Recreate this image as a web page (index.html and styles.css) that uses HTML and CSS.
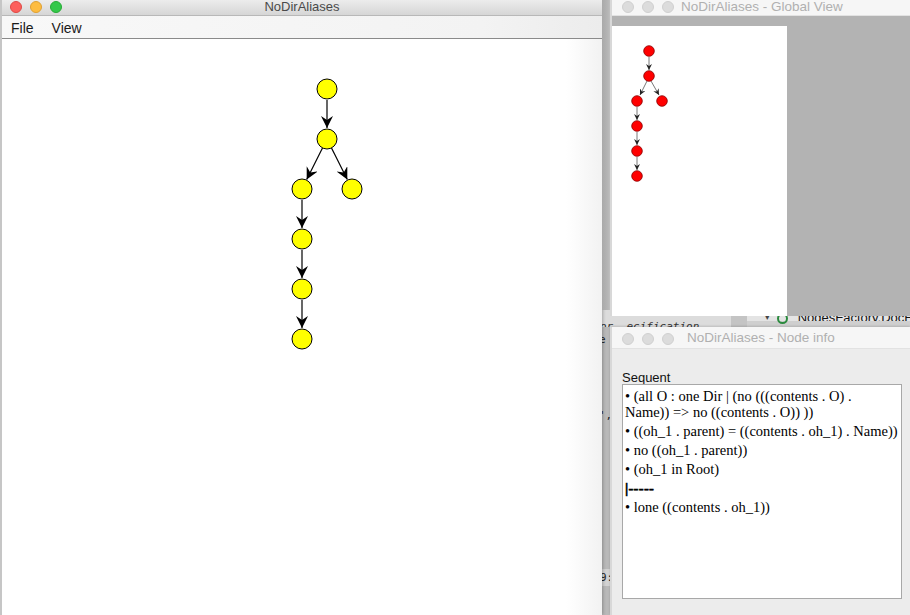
FILE: index.html
```html
<!DOCTYPE html>
<html>
<head>
<meta charset="utf-8">
<link rel="stylesheet" href="styles.css">
</head>
<body>
<div class="desktop">
  <div class="ide">
    <div class="ide-row">
      <span class="ide-code">or &nbsp;ecification</span>
      <span class="ide-gutter"></span>
      <span class="ide-tri">▾</span>
      <span class="ide-dot"></span>
      <span class="ide-name">NodesFactory.DocF</span>
    </div>
    <div class="ide-side">
      <span class="ide-bit b1">e</span>
      <span class="ide-bit b2">',</span>
      <span class="ide-bit b3">9:</span>
    </div>
  </div>

  <div class="window main-win">
    <div class="titlebar active">
      <div class="lights">
        <span class="light red"></span>
        <span class="light yellow"></span>
        <span class="light green"></span>
      </div>
      <div class="title">NoDirAliases</div>
    </div>
    <div class="menubar">
      <span class="menu">File</span>
      <span class="menu">View</span>
    </div>
    <div class="canvas">
      <svg width="600" height="576" viewBox="2 39 600 576">
        <defs>
          <marker id="ah" markerWidth="14" markerHeight="14" refX="12" refY="6" orient="auto" markerUnits="userSpaceOnUse">
            <path d="M12,6 L0,0 L4,6 L0,12 Z" fill="#000"/>
          </marker>
        </defs>
        <g stroke="#000" stroke-width="1.2" fill="none" marker-end="url(#ah)">
          <line x1="327" y1="100" x2="327" y2="128"/>
          <line x1="322.5" y1="148" x2="306.7" y2="179.6"/>
          <line x1="331.5" y1="148" x2="347.3" y2="179.6"/>
          <line x1="302" y1="200" x2="302" y2="228"/>
          <line x1="302" y1="250" x2="302" y2="278"/>
          <line x1="302" y1="300" x2="302" y2="328"/>
        </g>
        <g fill="#ffff00" stroke="#000" stroke-width="1">
          <circle cx="327" cy="89" r="10"/>
          <circle cx="327" cy="139" r="10"/>
          <circle cx="302" cy="189" r="10"/>
          <circle cx="352" cy="189" r="10"/>
          <circle cx="302" cy="239" r="10"/>
          <circle cx="302" cy="289" r="10"/>
          <circle cx="302" cy="339" r="10"/>
        </g>
      </svg>
    </div>
  </div>

  <div class="gutter-strip"></div>

  <div class="window global-win">
    <div class="titlebar inactive">
      <div class="lights">
        <span class="light grey"></span>
        <span class="light grey"></span>
        <span class="light grey"></span>
      </div>
      <div class="title left-title">NoDirAliases - Global View</div>
    </div>
    <div class="global-body">
      <div class="mini">
        <svg width="175" height="291" viewBox="612 27 175 291">
          <defs>
            <marker id="ahs" markerWidth="8" markerHeight="8" refX="6" refY="3" orient="auto" markerUnits="userSpaceOnUse">
              <path d="M6,3 L0,0 L2,3 L0,6 Z" fill="#222"/>
            </marker>
          </defs>
          <g stroke="#555" stroke-width="0.8" fill="none" marker-end="url(#ahs)">
            <line x1="649" y1="58" x2="649" y2="71"/>
            <line x1="647" y1="82" x2="640" y2="96"/>
            <line x1="651" y1="82" x2="659" y2="96"/>
            <line x1="637" y1="108" x2="637" y2="121"/>
            <line x1="637" y1="133" x2="637" y2="146"/>
            <line x1="637" y1="158" x2="637" y2="171"/>
          </g>
          <g fill="#ff0000" stroke="#8a0000" stroke-width="0.8">
            <circle cx="649" cy="52" r="5.3"/>
            <circle cx="649" cy="77" r="5.3"/>
            <circle cx="637" cy="102" r="5.3"/>
            <circle cx="662" cy="102" r="5.3"/>
            <circle cx="637" cy="127" r="5.3"/>
            <circle cx="637" cy="152" r="5.3"/>
            <circle cx="637" cy="177" r="5.3"/>
          </g>
        </svg>
      </div>
    </div>
  </div>

  <div class="window info-win">
    <div class="titlebar inactive tall">
      <div class="lights">
        <span class="light grey"></span>
        <span class="light grey"></span>
        <span class="light grey"></span>
      </div>
      <div class="title left-title info-title">NoDirAliases - Node info</div>
    </div>
    <div class="info-body">
      <div class="label">Sequent</div>
      <div class="seq-box">
        <p class="item">• (all O : one Dir | (no (((contents . O) . Name)) =&gt; no ((contents . O)) ))</p>
        <p class="item nowrap">• ((oh_1 . parent) = ((contents . oh_1) . Name))</p>
        <p class="item">• no ((oh_1 . parent))</p>
        <p class="item">• (oh_1 in Root)</p>
        <p class="item sep">|-----</p>
        <p class="item">• lone ((contents . oh_1))</p>
      </div>
    </div>
  </div>
</div>
</body>
</html>
```

FILE: styles.css
```css
* { box-sizing: border-box; }
html, body {
  margin: 0;
  padding: 0;
  width: 910px;
  height: 615px;
  overflow: hidden;
}
body {
  background: #b4b4b4;
  font-family: "Liberation Sans", Arial, sans-serif;
}
.desktop {
  position: relative;
  width: 910px;
  height: 615px;
}

/* background IDE fragments */
.ide {
  position: absolute;
  left: 596px;
  top: 310px;
  width: 314px;
  height: 305px;
  background: #dedede;
}
.ide-row {
  display: flex;
  align-items: flex-start;
  height: 17px;
  overflow: hidden;
  background: linear-gradient(#e4e4e4 0, #e4e4e4 11px, #cfcfcf 11px);
  font-size: 12px;
  color: #222;
  white-space: nowrap;
}
.ide-code {
  font-family: "DejaVu Sans Mono", monospace;
  font-style: italic;
  font-size: 11px;
  line-height: 12px;
  width: 138px;
  padding-left: 4px;
  padding-top: 11px;
  color: #333;
  background: #dcdcdc;
  height: 17px;
}
.ide-gutter {
  width: 16px;
  height: 17px;
  background: #c4c4c4;
}
.ide-tri {
  font-size: 9px;
  color: #444;
  margin-left: 18px;
  width: 12px;
  padding-top: 2px;
}
.ide-dot {
  width: 11px;
  height: 11px;
  border-radius: 50%;
  border: 2.5px solid #2b8a3e;
  margin-right: 10px;
  margin-top: 3px;
}
.ide-name {
  font-size: 13px;
  line-height: 15px;
  height: 11px;
  overflow: hidden;
  color: #111;
}
.ide-side {
  position: relative;
  width: 16px;
  height: 288px;
  background: #b9b9b9;
  font-family: "DejaVu Sans Mono", monospace;
  font-size: 11px;
  color: #222;
}
.ide-bit { position: absolute; left: 3px; }
.b1 { top: 6px; }
.b2 { top: 82px; }
.b3 { top: 242px; background: #d2d2d2; padding: 2px 1px; }

.gutter-strip {
  position: absolute;
  left: 602px;
  top: 0;
  width: 10px;
  height: 310px;
  background: linear-gradient(90deg, #a9a9a9, #b6b6b6 60%, #c8c8c8);
}

/* windows */
.window {
  position: absolute;
  display: flex;
  flex-direction: column;
  overflow: hidden;
}
.main-win {
  left: 0;
  top: 0;
  width: 602px;
  height: 615px;
  background: #fff;
  border-left: 2px solid #c6c6c6;
  box-shadow: 1px 0 3px rgba(0,0,0,0.25);
}
.global-win {
  left: 610px;
  top: 0;
  width: 300px;
  height: 316px;
  border-left: 2px solid #d8d8d8;
  background: #b3b3b3;
}
.info-win {
  left: 610px;
  top: 327px;
  width: 300px;
  height: 288px;
  background: #ececec;
  border-left: 2px solid #d8d8d8;
  box-shadow: 0 -1px 2px rgba(0,0,0,0.15);
}

.titlebar {
  position: relative;
  height: 16px;
  flex: none;
  display: flex;
  align-items: flex-start;
  justify-content: center;
}
.titlebar.active {
  background: linear-gradient(#ececec, #d6d6d6);
  border-bottom: 1px solid #b8b8b8;
}
.titlebar.inactive {
  background: #f6f6f6;
  border-bottom: 1px solid #e2e2e2;
}
.titlebar.tall {
  height: 22px;
  align-items: center;
}
.lights {
  position: absolute;
  left: 8px;
  top: 0;
  height: 13px;
  display: flex;
  gap: 8px;
  align-items: center;
}
.titlebar.tall .lights { top: 5px; }
.light {
  width: 12px;
  height: 12px;
  border-radius: 50%;
}
.red { background: #fc605c; border: 0.5px solid #de4a45; }
.yellow { background: #fdbc40; border: 0.5px solid #dea033; }
.green { background: #34c84a; border: 0.5px solid #27aa35; }
.grey { background: #dcdcdc; border: 0.5px solid #d0d0d0; }
.global-win .lights, .info-win .lights { left: 10px; }

.title {
  font-size: 13px;
  line-height: 14px;
  color: #4a4a4a;
}
.left-title {
  position: absolute;
  left: 69px;
  color: #b0b0b0;
  font-size: 13.5px;
}
.global-win .left-title { top: 0; }
.info-title { left: 75px; }

.menubar {
  height: 23px;
  flex: none;
  display: flex;
  align-items: center;
  gap: 18px;
  padding: 1px 0 0 9px;
  background: linear-gradient(90deg, #f8f8f8, #f3f3f3 80%, #ececec);
  border-bottom: 1px solid #8a8a8a;
  font-size: 14px;
  color: #1a1a1a;
}
.canvas {
  flex: 1;
  background: linear-gradient(90deg, #fff 0, #fff 94%, #f2f2f2);
}
.canvas svg { display: block; }

.global-body {
  flex: 1;
  padding-top: 10px;
}
.mini {
  width: 175px;
  height: 291px;
  background: #fff;
}
.mini svg { display: block; }

.info-body {
  flex: 1;
  padding: 21px 8px 16px 10px;
  display: flex;
  flex-direction: column;
}
.label {
  font-size: 13px;
  color: #111;
  line-height: 15px;
  height: 14px;
}
.seq-box {
  flex: 1;
  background: #fff;
  border: 1px solid #a8a8a8;
  padding: 3px 2px 1px 2px;
  font-family: "Liberation Serif", "Times New Roman", serif;
  font-size: 14.5px;
  color: #000;
}
.item {
  margin: 0 0 3px 0;
  line-height: 16px;
}
.nowrap { white-space: nowrap; }
.sep {
  font-weight: bold;
  color: #000;
  -webkit-text-stroke: 0.6px #000;
  letter-spacing: 0.3px;
}
```
